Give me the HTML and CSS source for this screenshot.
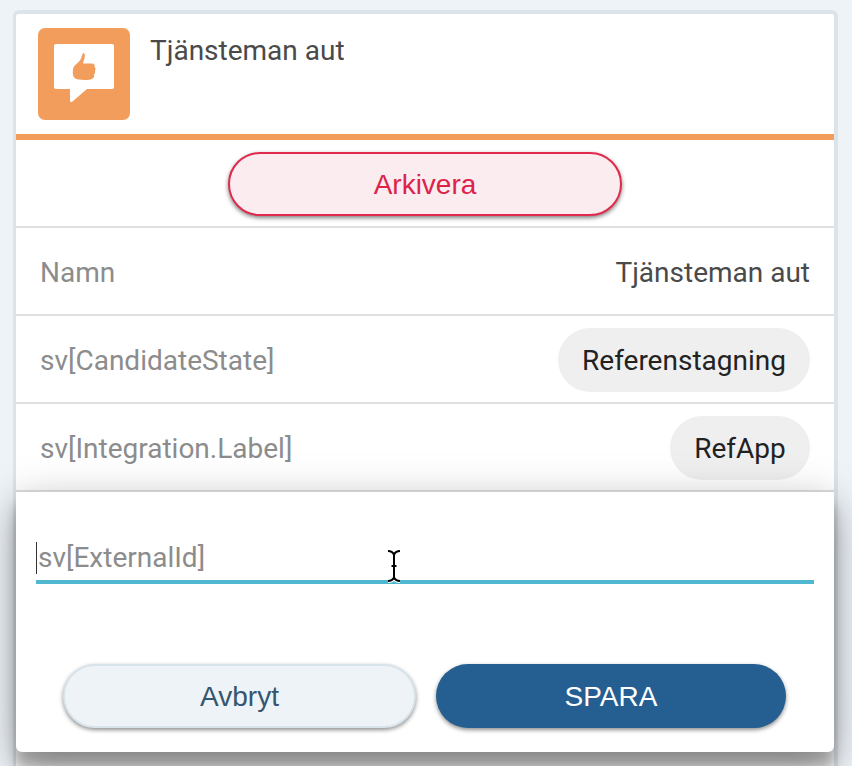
FILE: index.html
```html
<!DOCTYPE html>
<html lang="sv">
<head>
<meta charset="utf-8">
<title>Tjänsteman aut</title>
<link rel="stylesheet" href="styles.css">
</head>
<body>
<main class="card">
  <header class="head">
    <div class="logo">
      <svg class="logo-svg" viewBox="0 0 92 92" width="92" height="92" aria-hidden="true">
        <path class="bubble" d="M18 16H74a2 2 0 0 1 2 2V59a2 2 0 0 1-2 2H49L34.500 73.500C33.300 74.500 32 74 32 72.500V61H18a2 2 0 0 1-2-2V18a2 2 0 0 1 2-2Z"/>
        <path class="thumb" d="M45 25C46.500 25 47 26.500 46.800 28.500C46.500 31 45.500 33 45 35.500L54 35.500C56 35.500 57 36.500 56.500 38.500C57.500 39.500 58 41.500 57 42.500C57.500 44 57.300 45.500 56 46.300C56.500 48 56 49.800 54.500 50.800C53 51.800 50 52 47 52L41 51.600C38.500 51.300 36.500 50.500 35.500 48.500C34.500 46 34.500 42.500 35.500 39.500C36.500 37 39.500 35.500 41.500 33C43.300 31 44 27 45 25Z"/>
      </svg>
    </div>
    <h1 class="title">Tjänsteman aut</h1>
  </header>
  <div class="action-row">
    <button class="btn-archive" type="button">Arkivera</button>
  </div>
  <div class="row">
    <span class="label">Namn</span>
    <span class="value">Tjänsteman aut</span>
  </div>
  <div class="row">
    <span class="label">sv[CandidateState]</span>
    <span class="chip chip-wide">Referenstagning</span>
  </div>
  <div class="row">
    <span class="label">sv[Integration.Label]</span>
    <span class="chip chip-narrow">RefApp</span>
  </div>
</main>

<section class="sheet">
  <div class="field">
    <span class="caret"></span><span class="placeholder">sv[ExternalId]</span>
  </div>
  <div class="actions">
    <button class="btn btn-cancel" type="button">Avbryt</button>
    <button class="btn btn-save" type="button">SPARA</button>
  </div>
  <svg class="ibeam" viewBox="0 0 16 34" width="16" height="34" aria-hidden="true">
    <path class="ibeam-halo" d="M2 32C5 32 7 30.500 8 28.500C9 30.500 11 32 14 32"/>
    <path class="ibeam-line" d="M2 2C5 2 7 3.500 8 5.500C9 3.500 11 2 14 2M8 5.500V28M5.500 17H10.500M2 32C5 32 7 30.500 8 28.500C9 30.500 11 32 14 32"/>
  </svg>
</section>
</body>
</html>
```
FILE: styles.css
```css
* { box-sizing: border-box; }

html, body {
  margin: 0;
  height: 766px;
  overflow: hidden;
}

body {
  position: relative;
  background: #eef3f8;
  font-family: Roboto, "Liberation Sans", sans-serif;
  padding: 10px 14px 0 13px;
}

.card {
  height: 756px;
  background: #fff;
  border: 3px solid #dde4e9;
  border-top-width: 4px;
  border-right-width: 4px;
  border-bottom: 0;
  border-radius: 6px 6px 0 0;
}

.head {
  height: 126px;
  border-bottom: 6px solid #f29d5c;
  display: flex;
  align-items: flex-start;
  padding: 14px 22px 0;
  gap: 20px;
}

.logo {
  width: 92px;
  height: 92px;
  background: #f29d5c;
  border-radius: 7px;
  flex: none;
}

.logo-svg { display: block; }
.bubble { fill: #fff; }
.thumb { fill: #f29d5c; }

.title {
  margin: 6px 0 0;
  font-size: 28px;
  font-weight: 400;
  line-height: 33px;
  color: #4a4a4a;
}

.action-row {
  height: 88px;
  border-bottom: 2px solid #e0e0e0;
  display: flex;
  justify-content: center;
  padding-top: 12px;
}

.btn-archive {
  width: 394px;
  height: 64px;
  border: 2px solid #e12a4b;
  border-radius: 32px;
  background: #fbecf0;
  color: #dc2349;
  font: 400 28px "Liberation Sans", Arial, sans-serif;
  box-shadow: 0 2px 4px rgba(0, 0, 0, .5);
  padding: 2px 0 0;
}

.row {
  height: 88px;
  border-bottom: 2px solid #e0e0e0;
  display: flex;
  align-items: center;
  justify-content: space-between;
  padding: 2px 24px 0;
  font-size: 28px;
}

.label { color: #8c8c8c; }
.value { color: #4a4a4a; }

.chip {
  height: 64px;
  border-radius: 32px;
  background: #efefef;
  color: #222;
  display: flex;
  align-items: center;
  justify-content: center;
}

.chip-wide { width: 252px; }
.chip-narrow { width: 140px; }

.sheet {
  position: absolute;
  left: 16px;
  top: 491px;
  width: 818px;
  height: 261px;
  background: #fff;
  border-top: 1px solid #d0d0d0;
  border-radius: 0 0 6px 6px;
  box-shadow: 0 19px 38px rgba(0, 0, 0, .3), 0 15px 12px rgba(0, 0, 0, .22), 0 0 44px rgba(0, 0, 0, .1);
  padding: 49px 20px 0;
}

.field {
  height: 43px;
  border-bottom: 4px solid #4fb8d0;
  display: flex;
  align-items: flex-start;
  font-size: 28px;
  line-height: 33px;
}

.caret {
  width: 1px;
  height: 32px;
  margin: 1px 1px 0 0;
  background: #333;
  flex: none;
}

.placeholder { color: #8c8c8c; }

.actions {
  display: flex;
  gap: 20px;
  margin: 80px 28px 0 27px;
}

.btn {
  height: 64px;
  border-radius: 32px;
  font: 400 28px "Liberation Sans", Arial, sans-serif;
  padding: 2px 0 0;
  box-shadow: 0 2px 4px rgba(0, 0, 0, .45);
}

.btn-cancel {
  width: 353px;
  background: #eef3f8;
  border: 2px solid #d9e3ea;
  color: #35566f;
}

.btn-save {
  width: 350px;
  background: #255e90;
  border: 0;
  color: #fff;
}

.ibeam {
  position: absolute;
  left: 370px;
  top: 57px;
}

.ibeam path { fill: none; }
.ibeam-halo { stroke: #fff; stroke-width: 4; }
.ibeam-line { stroke: #000; stroke-width: 2; }
```
